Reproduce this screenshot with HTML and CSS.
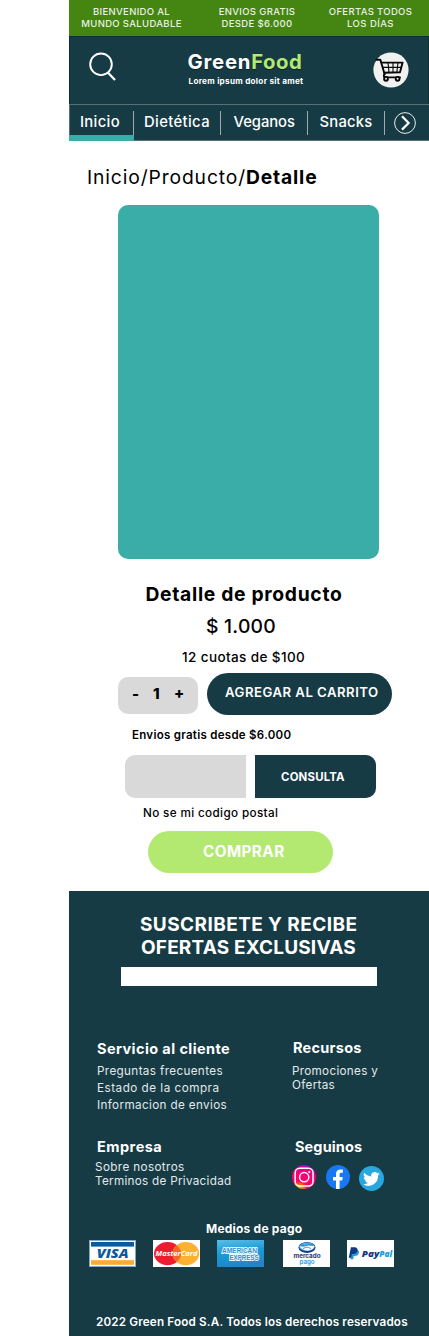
FILE: index.html
```html
<!DOCTYPE html>
<html lang="es">
<head>
<meta charset="utf-8">
<title>GreenFood - Detalle</title>
<link rel="stylesheet" href="styles.css">
</head>
<body>
<div class="app">
  <div class="banner">
    <p class="promo promo-welcome">BIENVENIDO AL<br>MUNDO SALUDABLE</p>
    <p class="promo promo-shipping">ENVIOS GRATIS<br>DESDE $6.000</p>
    <p class="promo promo-offers">OFERTAS TODOS<br><span class="promo-days">LOS DÍAS</span></p>
  </div>
  <header class="header">
    <svg class="search" viewBox="0 0 28 30"><circle cx="12" cy="12.3" r="10.8" fill="none" stroke="#fff" stroke-width="1.9"/><path d="M18.8 20.6 26 28" stroke="#fff" stroke-width="2.2" fill="none"/></svg>
    <div class="brand">
      <div class="logo"><span class="logo-green">Green</span><span class="logo-food">Food</span></div>
      <div class="tagline">Lorem ipsum dolor sit amet</div>
    </div>
    <svg class="cart" viewBox="0 0 36 36"><circle cx="18" cy="18" r="17.6" fill="#f1f1f2"/><g fill="none" stroke="#080808" stroke-width="1.9" stroke-linecap="round" stroke-linejoin="round"><path d="M3.400 7.800H7.400L11.600 22.200"/><path d="M8.400 10.600H29.600L27 20.200 11.300 20.800"/><path stroke-width="1.100" d="M10 15.400H28M15 10.800 16 20.400M20 10.800V20.400M25 10.800 23.800 20.400"/><path d="M11.600 22.200Q9.600 24.600 12.600 25.400H27"/><circle cx="13" cy="26.800" r="1.900" fill="#f1f1f2"/><circle cx="24.600" cy="26.800" r="1.900" fill="#f1f1f2"/></g></svg>
  </header>
  <nav class="nav">
    <a class="tab tab-inicio">Inicio</a>
    <a class="tab tab-dietetica">Dietética</a>
    <a class="tab tab-veganos">Veganos</a>
    <a class="tab tab-snacks">Snacks</a>
    <svg class="next" viewBox="0 0 22 22"><circle cx="11" cy="11" r="10.4" fill="none" stroke="#e8eced" stroke-width="1"/><path d="M8 4.2 14.6 11 8 17.6" fill="none" stroke="#fff" stroke-width="2.200"/></svg>
  </nav>

  <main class="product">
    <div class="crumbs"><span class="crumb-path">Inicio/Producto/</span><b class="crumb-here">Detalle</b></div>
    <div class="photo"></div>
    <h1 class="title">Detalle de producto</h1>
    <div class="price">$ 1.000</div>
    <div class="installments">12 cuotas de $100</div>
    <div class="buy-row">
      <div class="stepper"><span class="minus">-</span><span class="count">1</span><span class="plus">+</span></div>
      <div class="add">AGREGAR AL CARRITO</div>
    </div>
    <div class="shipping">Envios gratis desde $6.000</div>
    <div class="zip-row"><div class="zip"></div><div class="consult">CONSULTA</div></div>
    <div class="zip-help">No se mi codigo postal</div>
    <div class="buy">COMPRAR</div>
  </main>

  <footer class="footer">
    <div class="subscribe"><div class="sub-first">SUSCRIBETE Y RECIBE</div><div class="sub-second">OFERTAS EXCLUSIVAS</div></div>
    <div class="email"></div>
    <div class="columns">
      <section class="col-left">
        <h2 class="service-title">Servicio al cliente</h2>
        <ul class="links links-open"><li>Preguntas frecuentes</li><li class="link-estado">Estado de la compra</li><li>Informacion de envios</li></ul>
      </section>
      <section class="col-right">
        <h2 class="resources-title">Recursos</h2>
        <ul class="links resources"><li>Promociones y</li><li>Ofertas</li></ul>
      </section>
    </div>
    <div class="columns columns-second">
      <section class="col-left">
        <h2 class="company-title">Empresa</h2>
        <ul class="links company"><li>Sobre nosotros</li><li class="link-terms">Terminos de Privacidad</li></ul>
      </section>
      <section class="col-right">
        <h2 class="follow-title">Seguinos</h2>
        <div class="social">
          <svg class="social-icon" viewBox="0 0 24 24"><defs><radialGradient id="ig" cx=".3" cy="1" r="1.050"><stop offset="0" stop-color="#ffd500"/><stop offset=".16" stop-color="#ff7a00"/><stop offset=".32" stop-color="#ff0069"/><stop offset=".84" stop-color="#f0007c"/><stop offset="1" stop-color="#7a0ff0"/></radialGradient></defs><circle cx="12" cy="12" r="12" fill="url(#ig)"/><rect x="3.2" y="3.2" width="17.8" height="17.8" rx="4.5" fill="none" stroke="#fff" stroke-width="1.5"/><circle cx="12.2" cy="12.2" r="4.6" fill="none" stroke="#fff" stroke-width="1.5"/><circle cx="17.3" cy="7" r="1.1" fill="#fff"/></svg>
          <svg class="social-icon" viewBox="0 0 24 24"><circle cx="12" cy="12" r="12" fill="#1877f2"/><path d="M10 24V15.6H7V12H10V9.2C10 6.2 11.7 4.6 14.4 4.6c1.2 0 2.5.2 2.5.2V7.7H15.4c-1.4 0-1.8.9-1.8 1.8V12H16.8L16.2 15.6H13.6V24Z" fill="#fff"/></svg>
          <svg class="social-icon social-twitter" viewBox="0 0 24 24"><circle cx="12" cy="12" r="12" fill="#29a7df"/><path transform="translate(3.9 4.2) scale(.68)" d="M23.6 4.9a9 9 0 0 1-2.7.8 4.900 4.900 0 0 0 2.100-2.700 9.600 9.600 0 0 1-3 1.200A4.800 4.800 0 0 0 11.600 8.500 13.600 13.600 0 0 1 1.700 3.500a4.800 4.800 0 0 0 1.500 6.400 4.700 4.700 0 0 1-2.200-.6 4.800 4.800 0 0 0 3.900 4.800 4.800 4.800 0 0 1-2.200.1 4.800 4.800 0 0 0 4.500 3.300A9.600 9.600 0 0 1 .100 19.500 13.600 13.600 0 0 0 21.200 7.400a9.600 9.600 0 0 0 2.400-2.500Z" fill="#fff"/></svg>
        </div>
      </section>
    </div>
    <div class="pay-title">Medios de pago</div>
    <div class="cards">
      <svg class="card" viewBox="0 0 47 27"><rect width="47" height="27" fill="#7fa9cf"/><rect x="1" y="1" width="45" height="25" fill="#fff"/><rect x="2" y="2" width="43" height="4.600" fill="#0a5a9c"/><rect x="2" y="20.200" width="43" height="4.600" fill="#fbab2e"/><text class="visa" x="23.700" y="17.800" text-anchor="middle" textLength="32" lengthAdjust="spacingAndGlyphs">VISA</text></svg>
      <svg class="card" viewBox="0 0 47 27"><rect width="47" height="27" fill="#fff"/><ellipse cx="14.600" cy="13.600" rx="13.600" ry="11.600" fill="#ed1c2e"/><ellipse cx="32.800" cy="13.600" rx="13.400" ry="11.600" fill="#fcb131"/><path d="M23.700 5.300Q28.200 9 28.200 13.600T23.700 21.900Q19.400 18.500 19.400 13.600T23.700 5.300Z" fill="#f2672a"/><text class="master" x="23.500" y="16.400" text-anchor="middle" textLength="42" lengthAdjust="spacingAndGlyphs">MasterCard</text></svg>
      <svg class="card" viewBox="0 0 47 27"><defs><linearGradient id="ax" x1="0" y1="0" x2=".2" y2="1"><stop offset="0" stop-color="#58bfe8"/><stop offset=".5" stop-color="#1a9bd8"/><stop offset="1" stop-color="#2384c6"/></linearGradient></defs><rect width="47" height="27" fill="url(#ax)"/><text class="amex" x="5" y="12.500" textLength="35" lengthAdjust="spacingAndGlyphs">AMERICAN</text><text class="amex" x="12.500" y="20.300" textLength="29" lengthAdjust="spacingAndGlyphs">EXPRESS</text></svg>
      <svg class="card card-mp" viewBox="0 0 47 27"><rect width="47" height="27" fill="#fff"/><ellipse cx="24" cy="7.400" rx="8.500" ry="5.500" fill="#173f88"/><ellipse cx="24" cy="6.700" rx="7.700" ry="4.300" fill="#42b5eb"/><path d="M16.500 6Q20 7.500 22 5.800L25 5.200 31.500 6Q31 9.500 24.500 10.800 18 9.800 16.500 6Z" fill="#fff"/><path d="M18 4.800 21.500 6.200 25 4.900 30 5.200M20 8.500Q24 5.500 28 8.500" fill="none" stroke="#173f88" stroke-width=".6"/><text class="mp mp-dark" x="24" y="18.400" text-anchor="middle" textLength="27" lengthAdjust="spacingAndGlyphs">mercado</text><text class="mp mp-light" x="24" y="23.600" text-anchor="middle" textLength="15" lengthAdjust="spacingAndGlyphs">pago</text></svg>
      <svg class="card card-pp" viewBox="0 0 47 27"><rect width="47" height="27" fill="#fff"/><path d="M5 9.500H9.300Q12.700 10 11.800 13.500 10.800 16 7.600 16H6.800L6.200 19.300H3.300Z" fill="#1b9de0"/><path d="M3.900 7.200H8.200Q11 7.600 10.500 11 9.600 14 6.300 14H4.900L4.100 17.800H1.800Z" fill="#123a80"/><text class="pp" x="14.800" y="16.600" textLength="17.500" lengthAdjust="spacingAndGlyphs" fill="#143a84">Pay</text><text class="pp" x="32.200" y="16.600" textLength="13" lengthAdjust="spacingAndGlyphs" fill="#1b9de0">Pal</text></svg>
    </div>
    <div class="legal">2022 Green Food S.A. Todos los derechos reservados</div>
  </footer>
</div>
</body>
</html>
```

FILE: styles.css
```css
* { box-sizing: border-box; margin: 0; padding: 0; }
body { background: #fff; color: #000; font-family: Inter, "Open Sans", sans-serif; white-space: nowrap; }
ul { list-style: none; }
svg { display: block; flex: none; }
.app { width: 360px; margin-left: 69px; }

/* Top banner */
.banner { display: flex; height: 36px; padding-top: 6px; background: #458613; color: #e9f1e2; }
.promo { flex: none; text-align: center; font-size: 9.5px; font-weight: 500; line-height: 12px; letter-spacing: .34px; }
.promo-welcome { width: 125px; }
.promo-shipping { width: 126px; }
.promo-offers { width: 101px; }
.promo-days { letter-spacing: .45px; }

/* Header */
.header { display: flex; height: 68px; background: #173b45; border: 1px solid #102e36; border-bottom: 0; color: #fff; }
.search { width: 28px; height: 30px; margin: 15px 0 0 18.500px; }
.brand { width: 118px; margin: 13px 0 0 71px; }
.logo { font-size: 20.3px; font-weight: 700; line-height: 24px; text-shadow: 0 1px 1px #0c1f25; }
.logo-green { letter-spacing: .8px; }
.logo-food { letter-spacing: .48px; color: #b3e971; }
.tagline { margin: 2px 0 0 1px; font-size: 8.2px; font-weight: 700; line-height: 11px; letter-spacing: .26px; }
.cart { width: 36px; height: 36px; margin: 15px 0 0 67.500px; }

/* Navigation */
.nav { display: flex; height: 37px; background: #173b45; border: 1px solid #587178; border-right: 0; color: #fff; font-size: 14.8px; font-weight: 500; line-height: 22px; }
.tab { position: relative; flex: none; height: 36px; padding-top: 6px; }
.tab::after { content: ""; position: absolute; right: 0; top: 6px; width: 1px; height: 24px; background: #a3a9ab; }
.tab-inicio { width: 63.500px; padding-left: 10px; letter-spacing: .34px; }
.tab-inicio::before { content: ""; position: absolute; left: -1px; bottom: 0; width: 65px; height: 6px; background: #3aada8; }
.tab-dietetica { width: 87px; padding-left: 10.500px; letter-spacing: .38px; }
.tab-veganos { width: 87px; padding-left: 13px; letter-spacing: -.05px; }
.tab-snacks { width: 77px; padding-left: 12px; letter-spacing: .22px; }
.next { width: 22px; height: 22px; margin: 7px 0 0 9.500px; }

/* Product */
.crumbs { padding: 24px 0 0 18px; font-size: 19.3px; line-height: 25px; }
.crumb-path { letter-spacing: .87px; }
.crumb-here { letter-spacing: .82px; }
.photo { width: 261px; height: 354px; margin: 15px 0 0 49px; border-radius: 10px; background: #3aada8; }
.title { margin: 23px 0 0 76.500px; font-size: 19.3px; font-weight: 700; line-height: 25px; letter-spacing: .68px; }
.price { margin: 7px 0 0 137px; font-size: 19.3px; font-weight: 500; line-height: 25px; letter-spacing: .24px; }
.installments { margin: 10px 0 0 113px; font-size: 13.5px; font-weight: 500; line-height: 17px; letter-spacing: .4px; }
.buy-row { display: flex; gap: 9px; margin: 7px 0 0 49px; }
.stepper { display: flex; width: 80px; height: 37px; margin-top: 4px; padding-left: 14px; border-radius: 10px; background: #d9d9d9; font-size: 15px; font-weight: 800; line-height: 33px; }
.minus { width: 21px; }
.count { width: 21px; }
.add { width: 185px; height: 42px; padding-left: 18px; border-radius: 21px; background: #173b45; color: #fff; font-size: 13.2px; font-weight: 600; line-height: 39px; letter-spacing: .47px; }
.shipping { margin: 12px 0 0 63px; font-size: 11.5px; font-weight: 600; line-height: 16px; letter-spacing: .28px; }
.zip-row { display: flex; gap: 9px; margin: 12px 0 0 56px; }
.zip { width: 121px; height: 43px; border-radius: 10px 0 0 10px; background: #d9d9d9; }
.consult { width: 121px; height: 43px; padding-left: 26px; border-radius: 0 10px 10px 0; background: #173b45; color: #fff; font-size: 11.4px; font-weight: 700; line-height: 44px; letter-spacing: .2px; }
.zip-help { margin: 7px 0 0 74px; font-size: 11.7px; font-weight: 500; line-height: 16px; letter-spacing: .36px; }
.buy { width: 185px; height: 42px; margin: 10px 0 0 79px; padding-left: 55px; border-radius: 21px; background: #b3e971; color: #fff; font-size: 15.3px; font-weight: 700; line-height: 42px; letter-spacing: .4px; }

/* Footer */
.footer { height: 445px; margin-top: 18px; padding-top: 22px; background: #173b45; color: #fff; }
.subscribe { padding-left: 71px; font-size: 19px; font-weight: 700; line-height: 23px; }
.sub-first { letter-spacing: .42px; }
.sub-second { padding-left: 1px; letter-spacing: .18px; }
.email { width: 256px; height: 19px; margin: 8px 0 0 52.300px; background: #fff; }
.columns { display: flex; height: 98px; margin-top: 54px; }
.columns-second { height: 84px; margin-top: 0; }
.col-left { width: 195px; padding-left: 28px; }
.col-right { padding-left: 28px; }
.footer h2 { font-size: 14.5px; font-weight: 700; line-height: 18px; }
.service-title { letter-spacing: .41px; }
.footer .resources-title { padding-left: 1px; line-height: 16px; letter-spacing: .27px; }
.company-title { letter-spacing: .48px; }
.follow-title { padding-left: 3px; letter-spacing: .12px; }
.links { font-size: 11.7px; line-height: 14px; letter-spacing: .36px; color: #e2e8ea; }
.links-open { margin-top: 5px; line-height: 17px; }
.link-estado { letter-spacing: .5px; }
.resources { margin-top: 8px; letter-spacing: .3px; }
.company { margin: 4px 0 0 -2px; letter-spacing: .38px; }
.link-terms { letter-spacing: .29px; }
.social { display: flex; gap: 10px; margin-top: 9px; }
.social-icon { width: 24px; height: 24px; }
.social-twitter { width: 25px; height: 25px; margin-top: 1px; margin-left: -1px; }
.pay-title { padding-left: 137px; font-size: 12px; font-weight: 700; line-height: 14px; letter-spacing: .22px; }
.cards { display: flex; gap: 17px; margin: 4px 0 0 20px; }
.card { width: 47px; height: 27px; }
.card-mp { margin-left: 1.500px; }
.legal { margin: 47px 0 0 27px; font-size: 11.7px; font-weight: 600; line-height: 16px; letter-spacing: .16px; }

/* Card lettering */
.visa { font: italic 800 12px "Open Sans", sans-serif; fill: #0a5a9c; }
.master { font: italic 700 7.500px "Open Sans", sans-serif; fill: #fff; }
.amex { font: 700 7.200px "Liberation Sans", sans-serif; fill: #2b93cf; stroke: #f2fafe; stroke-width: 1.800px; paint-order: stroke; }
.mp { font: 700 6.200px Inter, sans-serif; }
.mp-dark { fill: #263775; }
.mp-light { fill: #2aaae2; }
.pp { font: italic 800 8.500px "Open Sans", sans-serif; }
```
